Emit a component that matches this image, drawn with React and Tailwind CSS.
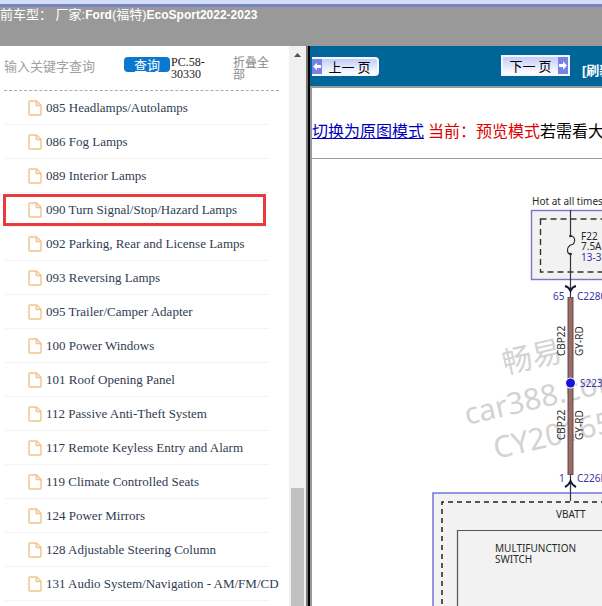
import React from "react";

const circuits = [
  "085 Headlamps/Autolamps",
  "086 Fog Lamps",
  "089 Interior Lamps",
  "090 Turn Signal/Stop/Hazard Lamps",
  "092 Parking, Rear and License Lamps",
  "093 Reversing Lamps",
  "095 Trailer/Camper Adapter",
  "100 Power Windows",
  "101 Roof Opening Panel",
  "112 Passive Anti-Theft System",
  "117 Remote Keyless Entry and Alarm",
  "119 Climate Controlled Seats",
  "124 Power Mirrors",
  "128 Adjustable Steering Column",
  "131 Audio System/Navigation - AM/FM/CD",
];

function FileIcon() {
  return (
    <svg className="h-4 w-3.5 shrink-0" viewBox="0 0 14 16" fill="none" stroke="#f1c48c" strokeWidth="1.4" aria-hidden="true">
      <path d="M1.7 1H8.5L13 5.3V14.3Q13 15 12.3 15H1.7Q1 15 1 14.3V1.7Q1 1 1.7 1Z" />
      <path d="M8.3 1V5.5H13" />
    </svg>
  );
}

function Sidebar() {
  return (
    <aside className="flex w-[306px] shrink-0 overflow-hidden bg-white">
      <div className="min-w-0 flex-1">
        <form className="mx-1 mr-2.5 flex h-[45px] items-start border-b border-dashed border-[#aaaaaa] pt-2.5" onSubmit={(e) => e.preventDefault()}>
          <input
            aria-label="输入关键字查询"
            placeholder="输入关键字查询"
            className="h-5 w-[120px] shrink-0 font-['Liberation_Sans','Noto_Sans_CJK_SC',sans-serif] text-[13px] outline-none placeholder:text-[#a0a0a0]"
          />
          <button className="mt-px h-[15px] w-[46px] shrink-0 rounded bg-[#0b78d0] font-['Noto_Sans_CJK_SC',sans-serif] text-[13px] leading-[14px] text-white">
            查询
          </button>
          <span className="ml-px w-[50px] shrink-0 text-xs leading-3 text-[#222222]">PC.58-30330</span>
          <button type="button" className="ml-3 w-[38px] shrink-0 text-left font-['Noto_Sans_CJK_SC',sans-serif] text-xs leading-3 text-[#888888]">
            折叠全部
          </button>
        </form>
        <ul>
          {circuits.map((name) => (
            <li key={name} className="relative ml-[5px] mr-5 h-[34px] border-b border-[#f3f3f3]">
              <a href="#diagram" className="flex h-full items-center gap-1 whitespace-nowrap pl-[23px] text-[13px] text-[#2f3b50]">
                <FileIcon />
                {name}
              </a>
              {name.startsWith("090") && (
                <span className="pointer-events-none absolute -left-0.5 right-[3px] top-px h-8 border-3 border-[#e83b40]" />
              )}
            </li>
          ))}
        </ul>
      </div>
      <div className="flex w-[17px] shrink-0 flex-col items-center bg-[#f0f0f0]">
        <svg className="mt-[7px] h-1 w-[7px] shrink-0" viewBox="0 0 7 4" aria-hidden="true">
          <path d="M3.5 0L7 4H0Z" fill="#505050" />
        </svg>
        <div className="mt-auto h-[21%] w-[13px] bg-[#c1c1c1]" />
      </div>
    </aside>
  );
}

function PagerArrow({ back }) {
  return (
    <svg className="h-full w-2.5 shrink-0" viewBox="0 0 10 16" preserveAspectRatio="none" aria-hidden="true">
      <rect width="10" height="16" fill="#7782e4" />
      <path d={back ? "M1 8L5 4V6.5H9V9.5H5V12Z" : "M9 8L5 4V6.5H1V9.5H5V12Z"} fill="#ffffff" />
    </svg>
  );
}

function Toolbar() {
  const pager =
    "flex shrink-0 items-center border-2 border-[#f5f7ff] bg-linear-to-b from-[#c3cbf8] to-[#ffffff] font-['Noto_Sans_CJK_SC',sans-serif] text-[13px] leading-none text-black";
  return (
    <div className="flex h-10 items-start overflow-hidden bg-[#006699] pl-0.5 pt-[9px]">
      <button className={pager + " mt-0.5 h-[19px] w-[67px] rounded-r-sm border-l-0"}>
        <PagerArrow back />
        <span className="flex-1">上一 页</span>
      </button>
      <button className={pager + " ml-[122px] h-[21px] w-[69px]"}>
        <span className="flex-1">下一 页</span>
        <PagerArrow />
      </button>
      <a href="#refresh" className="ml-3 mt-1.5 shrink-0 whitespace-nowrap font-['Liberation_Sans','Noto_Sans_CJK_SC',sans-serif] text-[13px] font-bold leading-5 text-white">
        [刷新]
      </a>
    </div>
  );
}

function Diagram() {
  return (
    <svg id="diagram" className="block h-[447px] w-[440px] font-['Noto_Sans',sans-serif] text-[10px]" viewBox="312 159 440 447" fill="none" role="img" aria-label="Turn signal wiring diagram">
      <g fill="#d3d3d3" className="font-['Noto_Sans','Noto_Sans_CJK_SC',sans-serif] text-[30px]">
        <text transform="translate(505 374) rotate(-13)">畅易</text>
        <text transform="translate(467 425) rotate(-13)">car388.com</text>
        <text transform="translate(496 459) rotate(-13)">CY20165</text>
      </g>
      <rect x="531.5" y="210.5" width="180" height="69" fill="#f2f2f2" stroke="#7775cf" strokeWidth="1.4" />
      <rect x="540.5" y="219" width="160" height="53" stroke="#333333" strokeWidth="1.4" strokeDasharray="6 4" />
      <rect x="433" y="493" width="300" height="130" fill="#f2f2f2" stroke="#7471dc" strokeWidth="1.5" />
      <path d="M442 622V502H720" stroke="#222222" strokeWidth="1.5" strokeDasharray="5 4" />
      <path d="M457.500 622V530.500H720" stroke="#555555" strokeWidth="1.2" />
      <path d="M570.500 210V236C576 236 576 244 570.500 245C566 248 567 254 570.500 254V298M570.500 475V501" stroke="#333344" strokeWidth="1.2" />
      <circle cx="570.5" cy="236" r="1.3" fill="#222222" />
      <circle cx="570.5" cy="254" r="1.3" fill="#222222" />
      <path d="M565 286Q569 287 570.500 291Q572 287 576 286M565 487Q569 485 570.500 481Q572 485 576 487" stroke="#161638" strokeWidth="2" />
      <path d="M570.500 297V475" stroke="#625756" strokeWidth="6" />
      <path d="M570.500 298V474" stroke="#a26a67" strokeWidth="3.500" />
      <circle cx="570.5" cy="383" r="5.500" fill="#ffffff" />
      <circle cx="570.5" cy="383" r="4.500" fill="#1717dc" />
      <g fill="#292929">
        <text x="532" y="205">Hot at all times</text>
        <text x="581" y="240">F22</text>
        <text x="581" y="250">7.5A</text>
        <text x="556" y="518">VBATT</text>
        <text x="495" y="552">MULTIFUNCTION</text>
        <text x="495" y="563">SWITCH</text>
        <text transform="translate(565 356) rotate(-90)">CBP22</text>
        <text transform="translate(583 356) rotate(-90)">GY-RD</text>
        <text transform="translate(565 440) rotate(-90)">CBP22</text>
        <text transform="translate(583 440) rotate(-90)">GY-RD</text>
      </g>
      <g fill="#3934a4">
        <text x="581" y="261">13-38</text>
        <text x="553" y="300">65</text>
        <text x="577" y="300">C2280B</text>
        <text x="580" y="387">S223</text>
        <text x="559" y="482">1</text>
        <text x="577" y="482">C226B</text>
      </g>
    </svg>
  );
}

export default function App() {
  return (
    <div className="flex h-screen flex-col overflow-hidden bg-white font-['Liberation_Serif','Noto_Sans_CJK_SC',serif]">
      <div className="h-[7px] shrink-0 border-b-3 border-[#7585c8] bg-[#d5def4]" />
      <header className="h-[39px] shrink-0 bg-[#999999] font-['Liberation_Sans','Noto_Sans_CJK_SC',sans-serif] text-[13px] leading-4 text-white">
        <h1 className="whitespace-nowrap">
          前车型： 厂家:<span className="text-xs font-bold leading-4">Ford</span>(福特)<span className="text-xs font-bold leading-4">EcoSport2022-2023</span>
        </h1>
      </header>
      <div className="flex min-h-0 flex-1">
        <Sidebar />
        <div className="w-1 shrink-0 border-l-2 border-[#777777] bg-black" />
        <main className="min-w-0 flex-1 overflow-hidden">
          <Toolbar />
          <div className="border-l-2 border-t-2 border-[#999999]">
            <div className="flex h-[71px] items-center whitespace-nowrap border-b border-[#999999] pt-3.5 font-['Noto_Sans_CJK_SC',sans-serif] text-base">
              <a href="#original" className="text-[#0000bb] underline">切换为原图模式</a>
              <span className="ml-1 text-[#dd0000]">当前：预览模式</span>
              <span>若需看大图</span>
            </div>
            <Diagram />
          </div>
        </main>
      </div>
    </div>
  );
}
